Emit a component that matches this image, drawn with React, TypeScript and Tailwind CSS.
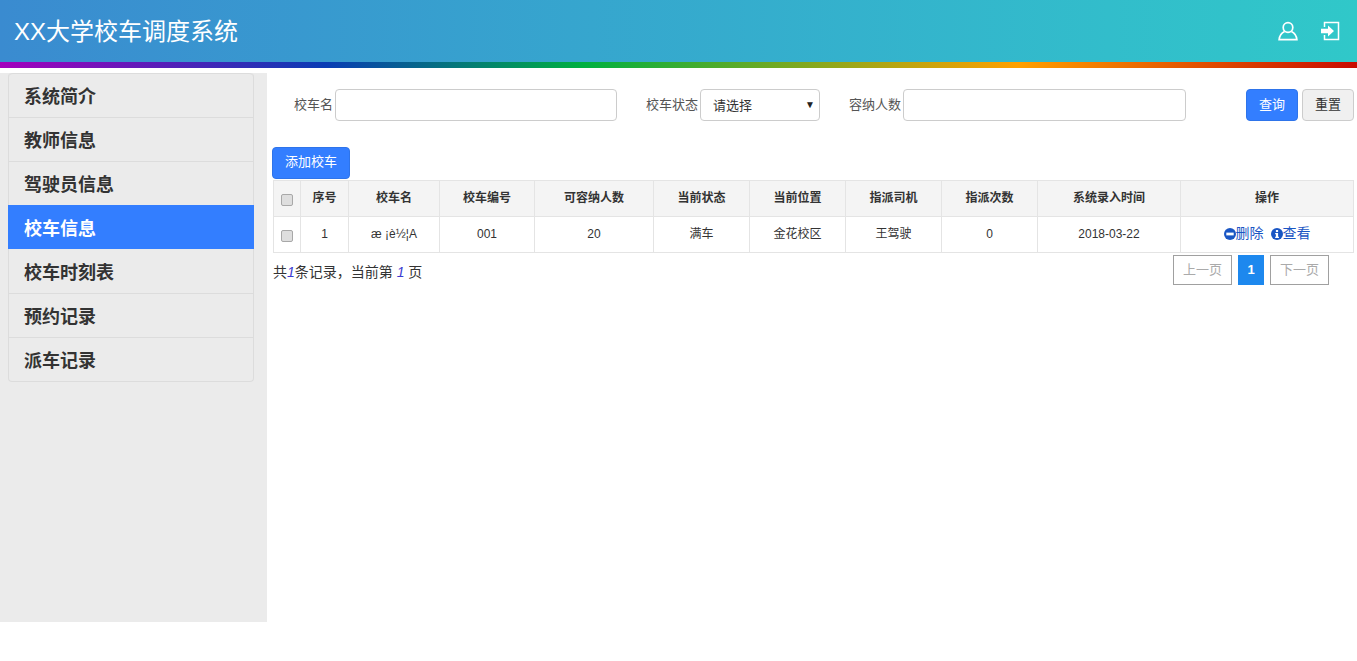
import React from 'react';

const font = { fontFamily: '"Liberation Sans", "Noto Sans CJK SC", sans-serif' };

const navItems = ['系统简介', '教师信息', '驾驶员信息', '校车信息', '校车时刻表', '预约记录', '派车记录'];

const columns = [
  { label: '序号', value: '1', width: 'w-[48px]' },
  { label: '校车名', value: 'æ ¡è½¦A', width: 'w-[91px]' },
  { label: '校车编号', value: '001', width: 'w-[95px]' },
  { label: '可容纳人数', value: '20', width: 'w-[119px]' },
  { label: '当前状态', value: '满车', width: 'w-[96px]' },
  { label: '当前位置', value: '金花校区', width: 'w-[96px]' },
  { label: '指派司机', value: '王驾驶', width: 'w-[96px]' },
  { label: '指派次数', value: '0', width: 'w-[96px]' },
  { label: '系统录入时间', value: '2018-03-22', width: 'w-[143px]' },
];

function Checkbox() {
  return <input type="checkbox" className="block mx-auto mt-[2px] appearance-none w-[12px] h-[12px] rounded-[2px] border border-[#a8a8a8] bg-[#dedede]" />;
}

function UserIcon() {
  return (
    <svg width="20" height="20" viewBox="0 0 20 20" fill="none" stroke="#fff" strokeWidth="1.7">
      <circle cx="10" cy="6.5" r="4.8" />
      <path d="M6.6 10.4C4 11.6 1.5 13.600 1.100 18.700H18.900C18.500 13.600 16 11.600 13.400 10.400" />
    </svg>
  );
}

function LoginIcon() {
  return (
    <svg width="20" height="20" viewBox="0 0 20 20" fill="none">
      <path d="M4.500 6V1.500H18.500V18.500H4.500V14" stroke="#fff" strokeWidth="1.500" />
      <path d="M1 7.800H8V4.500L14 10L8 15.500V12.200H1Z" fill="#fff" />
    </svg>
  );
}

function MinusIcon() {
  return (
    <svg width="12" height="12" viewBox="0 0 13 13" className="shrink-0">
      <circle cx="6.500" cy="6.500" r="6.500" fill="#1a56c4" />
      <rect x="2.500" y="5" width="8" height="3" fill="#fff" />
    </svg>
  );
}

function InfoIcon() {
  return (
    <svg width="12" height="12" viewBox="0 0 13 13" className="shrink-0">
      <circle cx="6.500" cy="6.500" r="6.500" fill="#1a56c4" />
      <rect x="5.300" y="2.200" width="2.400" height="2.200" fill="#fff" />
      <path d="M4.500 5.400H7.700V9.600H8.600V10.900H4.500V9.600H5.300V6.700H4.500Z" fill="#fff" />
    </svg>
  );
}

export default function App() {
  return (
    <div className="h-[661px] bg-white text-[#333] overflow-hidden" style={font}>
      {/* Header */}
      <header className="h-[62px] flex items-center justify-between pl-[14px] pr-[17px] bg-gradient-to-r from-[#3a8bd0] to-[#30c8c9]">
        <h1 className="text-[24px] text-white font-normal mt-[2px]">XX大学校车调度系统</h1>
        <div className="flex items-center gap-[22px]">
          <UserIcon />
          <LoginIcon />
        </div>
      </header>
      <div className="h-[6px] bg-[linear-gradient(to_right,#a400bc,#0a3cb4_24%,#00b040_43%,#ffa000_75%,#c80a00)]" />

      <div className="flex mt-[5px]">
        {/* Sidebar */}
        <aside className="w-[267px] h-[549px] bg-[#ebebeb] shrink-0 pl-[8px] pr-[13px]">
          <nav className="border-x border-b border-[#dcdcdc] rounded-[4px]">
            {navItems.map((item, i) => (
              <div
                key={item}
                className={`h-[44px] pl-[15px] flex items-center text-[18px] font-bold ${
                  i === 3 ? 'bg-[#337eff] text-white -mx-[1px] pl-[16px]' : 'text-[#333]'
                } ${i !== 3 && i !== 4 ? 'border-t border-[#dcdcdc] pt-[3px]' : 'pt-[4px]'} ${i === 0 ? 'rounded-t-[4px]' : ''}`}
              >
                {item}
              </div>
            ))}
          </nav>
        </aside>

        {/* Main */}
        <main className="flex-1 pl-[5px] pr-[3px]">
          <div className="flex items-center h-[32px] mt-[16px] text-[13px] text-[#555]">
            <span className="ml-[22px] mr-[2px]">校车名</span>
            <input className="w-[282px] h-[32px] border border-[#ccc] rounded-[4px] bg-white" />
            <span className="ml-[29px] mr-[2px]">校车状态</span>
            <div className="w-[120px] h-[32px] border border-[#ccc] rounded-[4px] bg-white flex items-center justify-between pl-[12px] pr-[4px] text-[#333]">
              <span className="mt-[2px]">请选择</span>
              <span className="text-[10px] text-[#222] -mt-[2px]">▼</span>
            </div>
            <span className="ml-[29px] mr-[2px]">容纳人数</span>
            <input className="w-[283px] h-[32px] border border-[#ccc] rounded-[4px] bg-white" />
            <button className="ml-[60px] w-[52px] h-[32px] rounded-[4px] bg-[#337eff] border border-[#2e74ea] text-white">查询</button>
            <button className="ml-[4px] w-[52px] h-[32px] rounded-[4px] bg-[#f0f0f0] border border-[#ccc] text-[#333]">重置</button>
          </div>

          <button className="block mt-[26px] w-[78px] h-[32px] rounded-[4px] bg-[#337eff] border border-[#2e74ea] text-white text-[13px] pb-[2px]">添加校车</button>

          <table className="ml-[1px] mt-[1px] w-[1081px] table-fixed border-collapse text-[12px] text-[#333]">
            <thead>
              <tr className="h-[36px] bg-[#f4f4f4]">
                <th className="w-[27px] border border-[#e4e4e4] p-0"><Checkbox /></th>
                {columns.map((c) => (
                  <th key={c.label} className={`${c.width} border border-[#e4e4e4] font-bold p-0 pb-[2px]`}>{c.label}</th>
                ))}
                <th className="border border-[#e4e4e4] font-bold p-0 pb-[2px]">操作</th>
              </tr>
            </thead>
            <tbody>
              <tr className="h-[36px]">
                <td className="border border-[#e4e4e4] p-0"><Checkbox /></td>
                {columns.map((c) => (
                  <td key={c.label} className="border border-[#e4e4e4] text-center p-0 pb-[2px]">{c.value}</td>
                ))}
                <td className="border border-[#e4e4e4] p-0 pb-[2px]">
                  <div className="flex items-center justify-center text-[14px] text-[#1a56c4]">
                    <MinusIcon />
                    <span className="mr-[7px]">删除</span>
                    <InfoIcon />
                    <span>查看</span>
                  </div>
                </td>
              </tr>
            </tbody>
          </table>

          <div className="flex items-start justify-between ml-[1px] mt-[2px] mr-[25px]">
            <div className="mt-[7px] text-[14px] leading-[20px] text-[#333]">
              共<i className="text-[#3a3ad0]">1</i>条记录，当前第 <i className="text-[#3a3ad0]">1</i> 页
            </div>
            <div className="flex gap-[6px] text-[13px]">
              <div className="w-[59px] h-[30px] border border-[#a0a0a0] text-[#aaa] flex items-center justify-center">上一页</div>
              <div className="w-[26px] h-[30px] bg-[#1d88ee] text-white font-bold flex items-center justify-center">1</div>
              <div className="w-[59px] h-[30px] border border-[#a0a0a0] text-[#aaa] flex items-center justify-center">下一页</div>
            </div>
          </div>
        </main>
      </div>
    </div>
  );
}
